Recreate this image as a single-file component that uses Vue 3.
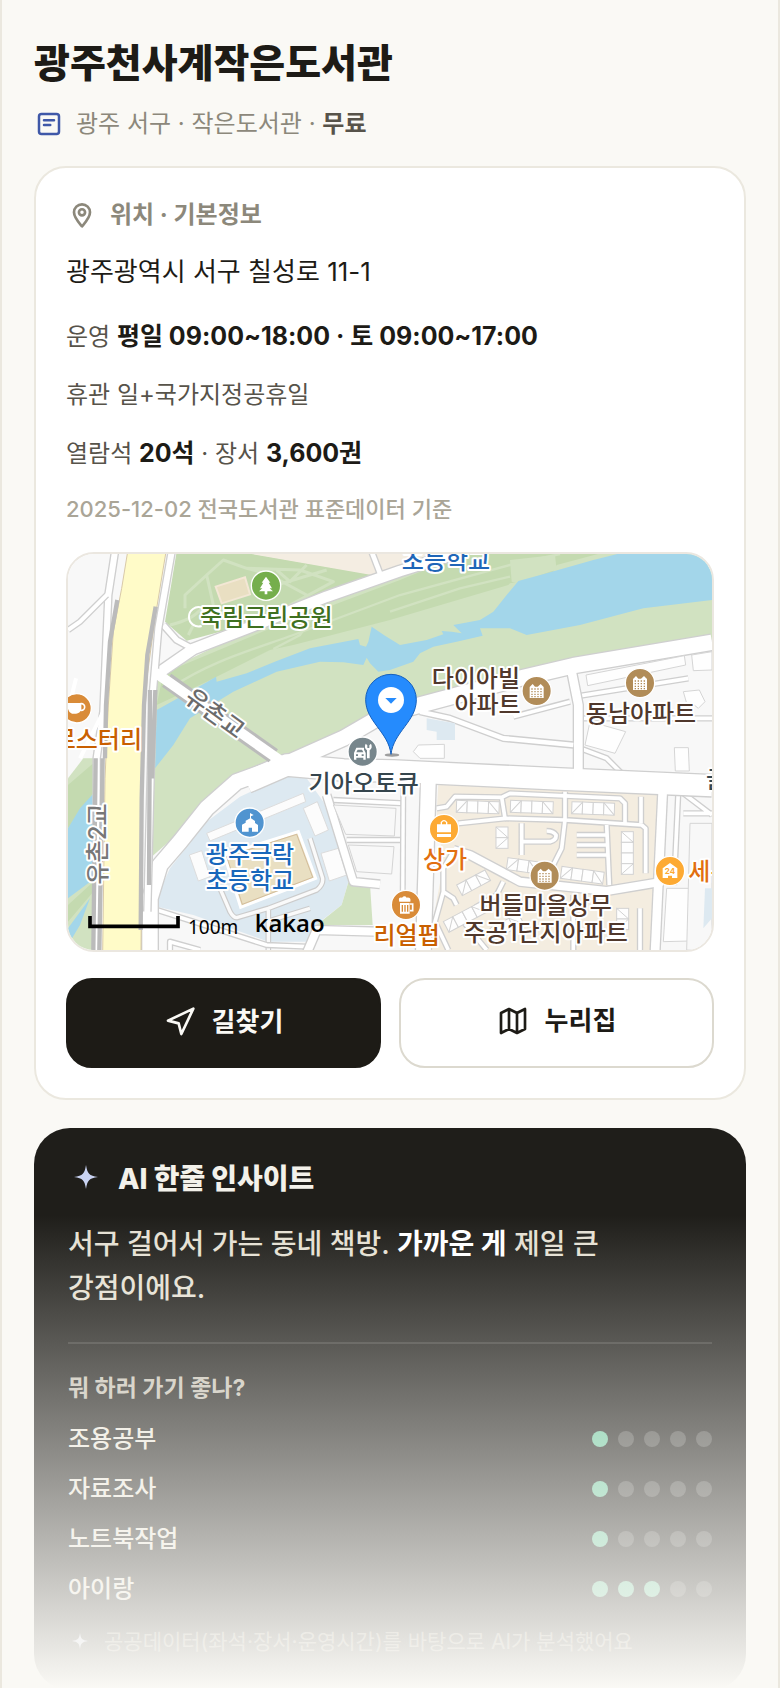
<template>
  <main class="app">
    <h1 class="title">광주천사계작은도서관</h1>
    <p class="meta">
      <svg class="icon" viewBox="0 0 24 24" aria-hidden="true">
        <rect x="4" y="4" width="16" height="16" rx="2" />
        <path d="M8 9h8M8 12.8h5" />
      </svg>
      <span>광주 서구 · 작은도서관 · <b>무료</b></span>
    </p>

    <section class="card">
      <h2 class="card-title">
        <svg class="icon pin" viewBox="0 0 24 24" aria-hidden="true">
          <path d="M12 20.500c-2.200-2.600-6-6.400-6-10.500a6 6 0 0 1 12 0c0 4.100-3.800 7.900-6 10.500z" />
          <circle cx="12" cy="10" r="2.300" />
        </svg>
        위치 · 기본정보
      </h2>
      <p class="address">광주광역시 서구 칠성로 11-1</p>
      <div class="facts">
        <p>운영 <b>평일 09:00~18:00 · 토 09:00~17:00</b></p>
        <p>휴관 일+국가지정공휴일</p>
        <p>열람석 <b>20석</b> · 장서 <b>3,600권</b></p>
      </div>
      <p class="source">2025-12-02 전국도서관 표준데이터 기준</p>

      <div class="map">
        <svg viewBox="24 27 1932 1188" preserveAspectRatio="xMidYMid slice" role="img" aria-label="지도">
          <rect x="24" y="27" width="1932" height="1188" fill="#f8f8f8" />

          <!-- 하천 둔치 -->
          <path fill="#d1e2c1" d="M270 400L600 240L1020 80L1200 20H1956V285L1540 350L1380 390L1080 465L760 605L560 705L430 800L275 935Z" />
          <path fill="#c4dab0" d="M310 385L620 255L1020 105L1230 20H1640L1490 60L1480 80L1375 110L1350 115L1345 120L990 225L700 300L630 315L440 410L290 480Z" />
          <path fill="none" stroke="#d1e2c1" stroke-width="7" d="M330 430C450 350 560 320 700 270L1020 150L1350 60L1500 27M640 312L720 270L760 210M990 200L1200 130L1350 95" />
          <path fill="#d1e2c1" d="M1350 45L1485 30L1490 75L1470 80L1375 115L1355 110Z" />
          <path fill="#a3d6ea" d="M290 495L440 412L468 395L470 410L560 385L650 348L750 310L895 282L900 300L918 305L925 290L935 245L975 272L1020 300L1100 285L1150 268L1145 258L1175 260L1205 265L1180 240L1260 225L1300 200L1340 150L1375 108L1460 85L1600 45L1700 20H1956V165L1750 190L1560 240L1400 270L1350 250H1260L1268 272L1190 290L1120 305L1080 325L1060 350L990 375L955 380L930 355L920 338L910 360L850 352L780 350L650 380L520 440L390 520L340 600L285 670Z" />
          <path fill="#d1e2c1" d="M24 700L70 640H110V1215H24Z" />
          <path fill="#c4dab0" d="M24 720L100 655V745L24 850ZM24 1080L100 1010V1040L24 1130Z" />
          <path fill="#a3d6ea" d="M24 850L60 790L105 740V1000L24 1060ZM24 1150L90 1060L60 1140L24 1200Z" />

          <!-- 공원 -->
          <path fill="#c4dab0" d="M350 20H540L935 88L700 180L520 250L380 287L315 230Z" />
          <path fill="#f4ede2" d="M535 20H935L958 85L935 90ZM935 20H1100V60L970 82Z" />
          <path fill="none" stroke="#d1e2c1" stroke-width="9" stroke-linejoin="round" d="M330 240C370 230 400 220 430 185M375 190V150L440 90L490 45L560 70L720 75L820 110L690 180M440 90L460 180M560 70L620 85L740 150M650 75L690 110L740 60M800 75L650 120M385 270L400 240" />
          <path fill="#e9dfc2" stroke="#f3e7d5" stroke-width="6" d="M467 125L555 97L570 148L485 175Z" />
          <path fill="none" stroke="#fff" stroke-width="6" d="M425 188A29 29 0 1 0 425 243" />

          <!-- 학교 부지 -->
          <path fill="#dde9f1" d="M680 690L740 700L790 770L830 880L865 1010L845 1080L780 1130L745 1190H625L400 1110L278 1082L330 970L440 830L540 755Z" />
          <path fill="#d1e2c1" d="M865 1012L930 1018L938 1140H770L845 1080Z" />
          <g fill="#fcfcfc" stroke="#dcdcdc" stroke-width="3">
            <path d="M440 865L730 745L737 770L450 888ZM730 790L772 770L805 855L765 873ZM388 930L425 917L450 995L415 1008ZM783 925L835 910L860 990L808 1008Z" />
          </g>
          <path fill="none" stroke="#ccc" stroke-width="17" stroke-linejoin="round" d="M750 880L788 1000Q790 1020 770 1035L625 1090L530 1118Q520 1118 510 1100L480 1030M625 1095V1215M620 1130L750 1090" />
          <path fill="none" stroke="#fafafa" stroke-width="10" stroke-linejoin="round" d="M750 880L788 1000Q790 1020 770 1035L625 1090L530 1118Q520 1118 510 1100L480 1030M625 1095V1215M620 1130L750 1090" />
          <path fill="#e9dfc2" stroke="#fff" stroke-width="9" d="M493 930L715 860L767 1000L542 1087Z" />
          <path fill="none" stroke="#c7ab86" stroke-width="2" d="M500 935L710 868L758 997L547 1078Z" />

          <!-- 아파트 단지 -->
          <path fill="#f4ede0" d="M1135 715L1793 743L1785 1015L1790 1215H1110L1120 1120L1150 960L1130 800Z" />

          <!-- 이면도로 -->
          <g fill="none" stroke-linejoin="round">
            <path v-for="(d, i) in alleys" :key="'c' + i" :d="d" stroke="#cfcfcf" stroke-width="19" />
            <path v-for="(d, i) in alleys" :key="'a' + i" :d="d" stroke="#fff" stroke-width="11" />
          </g>

          <!-- 주요 도로 -->
          <g fill="none" stroke-linejoin="round">
            <path v-for="(r, i) in roads" :key="'b' + i" :d="r.d" stroke="#cfcfcf" :stroke-width="r.w + 8" />
            <path v-for="(r, i) in roads" :key="'r' + i" :d="r.d" stroke="#fff" :stroke-width="r.w" />
          </g>

          <!-- 건물 -->
          <g fill="#fefefe" stroke="#d5d5d5" stroke-width="3">
            <path d="M1578 390L1873 332L1877 360L1583 422ZM1895 330L1956 320V375L1900 377ZM1870 440L1918 435L1935 470L1915 490L1900 478L1880 475ZM1590 530L1697 560L1665 625L1575 600ZM1075 600L1153 598V640H1080L1060 620ZM1843 608H1885L1888 678H1846ZM1820 1030H1890V1188L1810 1190Z" />
            <path fill="#f8f8f8" d="M820 780L1008 790L1003 873L857 868ZM865 900L1002 905L995 987L890 980ZM1890 835H1956V1215H1880Z" />
          </g>
          <path fill="#dde9f1" d="M1100 520L1185 535V585H1130V560L1100 555ZM1935 1030H1956V1120L1930 1150Z" />
          <g fill="#fefefe" stroke="#d2d2d2" stroke-width="3">
            <g v-for="(b, i) in blocks" :key="'k' + i" :transform="`translate(${b.x} ${b.y}) rotate(${b.r})`">
              <rect v-for="n in b.n" :key="n" :x="(n - 1) * 32" y="0" width="32" height="36" />
              <path :d="`M0 36L32 0M${(b.n - 1) * 32} 0l32 36`" />
            </g>
          </g>

          <!-- 고속 도로 -->
          <path fill="none" stroke="#cfcfcf" stroke-width="26" d="M165 20L145 150L130 500L110 640V1215M335 20L295 250L278 450L262 1100" />
          <path fill="none" stroke="#fff" stroke-width="18" d="M165 20L145 150L130 500L110 640V1215M335 20L295 250L278 450L262 1100V1215" />
          <path fill="none" stroke="#cfcfcf" stroke-width="20" d="M24 255L60 230L140 150" />
          <path fill="none" stroke="#fff" stroke-width="12" d="M24 255L60 230L145 145M24 500L48 400M60 640L130 500" />
          <path fill="#fffbc8" stroke="#d8c9a8" stroke-width="3" d="M203 20H318L285 220L262 390L248 600L243 1225H128L135 700L145 480L160 260L185 130Z" />
          <path fill="none" stroke="#bbb" stroke-width="13" d="M172 165L150 290L138 480L135 640M287 185L262 330L252 480L245 760L242 1155M270 435L267 1020M286 435L276 700M107 640L100 1215M128 640L118 1215" />

          <!-- 유촌교 -->
          <path fill="none" stroke="#bbb" stroke-width="48" d="M320 406L640 632" />
          <path fill="none" stroke="#fff" stroke-width="30" d="M285 382L660 646" />

          <g v-for="(p, i) in pois" :key="'p' + i" :transform="`translate(${p.x} ${p.y})`">
            <circle r="44" :fill="p.color" stroke="#fff" stroke-width="4" />
            <path v-if="p.type === 'tree'" fill="#fff" d="M0-27L13-9H8L18 8H11L21 17H4V26H-4V17H-21L-11 8H-18L-8-9H-13Z" />
            <g v-else-if="p.type === 'apt'">
              <path fill="#fff" d="M-21 21V-12L-12-21L-5-13H3L12-21L21-12V21Z" />
              <path stroke="#b18c58" stroke-width="4" stroke-dasharray="4 5" d="M-16-6H17M-16 2H17M-16 10H17M-16 17H17" />
            </g>
            <g v-else-if="p.type === 'cup'">
              <path fill="#fff" d="M-26-16H14V2Q10 16-2 16H-14Q-24 12-26 2Z" />
              <circle cx="14" cy="-4" r="10" fill="none" stroke="#fff" stroke-width="5" />
            </g>
            <g v-else-if="p.type === 'school'" fill="#fff">
              <path d="M-23 27V6L-12 0V-6L3-14L16-5V1L25 7V27H7V15H-3V27Z" />
              <path d="M1-12V-29L12-23L4-19V-12Z" />
            </g>
            <g v-else-if="p.type === 'bag'">
              <path fill="#fff" d="M-21-14H21V10H-21ZM-21 15H21V24H-21Z" />
              <path fill="none" stroke="#fff" stroke-width="4" d="M-8-12V-20Q0-30 8-20V-12" />
            </g>
            <g v-else-if="p.type === 'beer'">
              <path fill="#fff" d="M-20-10Q-25-24-12-22Q-4-30 2-22Q16-24 13-10ZM-18-6H11V26H-18Z" />
              <path fill="none" stroke="#fff" stroke-width="5" d="M12-3H20V17H12" />
              <path stroke="#d98b38" stroke-width="4" d="M-11 0V20M-3 0V20M5 0V20" />
            </g>
            <g v-else-if="p.type === 'store'">
              <path fill="#fff" d="M-22 21V-8L0-24L22-8V21H6V14H-6V21Z" />
              <text class="num" y="9" text-anchor="middle">24</text>
            </g>
            <g v-else>
              <path fill="#fff" fill-rule="evenodd" d="M-26 24V4L-19-12H4V-6L9 4V24H2V18H-19V24ZM-19 2H2L-2-6H-15ZM-20 8V13H-14V8ZM-3 8V13H3V8Z" />
              <path fill="#fff" d="M9-24L14-19V-11H20V-19L25-24Q31-12 21-4V20H13V-4Q3-12 9-24Z" />
            </g>
          </g>

          <text
            v-for="(l, i) in labels"
            :key="'l' + i"
            class="label"
            :text-anchor="l.anchor || 'middle'"
            :fill="l.color"
            :transform="`translate(${l.x} ${l.y}) rotate(${l.r || 0})`"
          >{{ l.text }}</text>

          <!-- 현재 도서관 위치 -->
          <ellipse cx="996" cy="630" rx="22" ry="5" fill="#777" opacity="0.7" />
          <path fill="#258bfd" stroke="#1560bd" stroke-width="3" d="M993 628C985 560 917 530 917 464A76 76 0 0 1 1069 464C1069 530 1001 560 993 628Z" />
          <circle cx="993" cy="465" r="39" fill="#fff" />
          <path fill="#258bfd" d="M976 459H1010L993 476Z" />

          <path fill="none" stroke="#000" stroke-width="11" d="M90 1113V1144H354V1113" />
          <text class="scale" x="384" y="1166">100m</text>
          <text class="kakao" x="584" y="1160">kakao</text>
        </svg>
      </div>

      <div class="actions">
        <button type="button" class="btn primary">
          <svg viewBox="0 0 24 24" aria-hidden="true">
            <path d="M3 11l19-9l-9 19l-2-8z" />
          </svg>
          길찾기
        </button>
        <a class="btn" href="#">
          <svg viewBox="0 0 24 24" aria-hidden="true">
            <path d="M3 6l6-3l6 3l6-3v15l-6 3l-6-3l-6 3zM9 3v15M15 6v15" />
          </svg>
          누리집
        </a>
      </div>
    </section>

    <section class="insight">
      <h2 class="insight-title">
        <svg viewBox="0 0 36 36" aria-hidden="true">
          <path d="M18 4C19.500 13 21 14.500 30 16C21 17.500 19.500 19 18 28C16.500 19 15 17.500 6 16C15 14.500 16.500 13 18 4Z" />
        </svg>
        AI 한줄 인사이트
      </h2>
      <p class="summary">서구 걸어서 가는 동네 책방. <b>가까운 게</b> 제일 큰 강점이에요.</p>
      <h3 class="question">뭐 하러 가기 좋나?</h3>
      <ul class="scores">
        <li v-for="s in scores" :key="s.name">
          <span>{{ s.name }}</span>
          <span class="dots">
            <i v-for="n in 5" :key="n" :class="{ on: n <= s.value }"></i>
          </span>
        </li>
      </ul>
      <p class="note">
        <svg viewBox="0 0 24 24" aria-hidden="true">
          <path d="M12 3C13 9 14 10 20 11C14 12 13 13 12 19C11 13 10 12 4 11C10 10 11 9 12 3Z" />
        </svg>
        공공데이터(좌석·장서·운영시간)를 바탕으로 AI가 분석했어요
      </p>
    </section>

    <div class="fade"></div>
  </main>
</template>

<script setup>
const scores = [
  { name: '조용공부', value: 1 },
  { name: '자료조사', value: 1 },
  { name: '노트북작업', value: 1 },
  { name: '아이랑', value: 3 },
]

// 지도 도로
const roads = [
  { d: 'M290 388L400 312L600 235L800 155L1020 78L1150 38L1200 20', w: 32 },
  { d: 'M310 240L350 285L400 312', w: 16 },
  { d: 'M935 20L960 85', w: 14 },
  { d: 'M270 1225V1060L300 960L360 890L440 790L530 710L670 660L850 580L970 510L1080 480L1380 400L1540 362L1956 292', w: 46 },
  { d: 'M560 712L680 660L850 675L1000 678L1500 702L1956 722', w: 64 },
  { d: 'M1080 500L1170 520L1330 580L1540 600', w: 14 },
  { d: 'M1533 370L1555 480V690', w: 26 },
  { d: 'M800 750L880 1010L960 1018', w: 22 },
  { d: 'M1030 700L1028 1090', w: 10 },
  { d: 'M1105 710L1090 1225', w: 44 },
  { d: 'M1808 740L1785 1225', w: 26 },
  { d: 'M1180 915L1230 930L1380 1010L1640 1038L1808 1010', w: 24 },
  { d: 'M740 1225L770 1155L960 1160', w: 24 },
]

const alleys = [
  'M1360 515L1530 470',
  'M1545 455L1885 400M1555 470V520L1956 520',
  'M1560 610L1640 640L1690 690',
  'M820 765L1035 775',
  'M860 885H1030',
  'M1130 790L1160 785L1185 755L1325 757L1350 745L1680 760L1695 775V835M1325 757L1335 820L1195 835',
  'M1335 820L1515 825L1515 740M1515 825L1745 840L1757 850V985M1385 835V930M1385 890H1470Q1490 885 1488 870Q1480 858 1460 858',
  'M1515 825L1505 910L1480 960M1640 840L1648 1020M1640 870H1550M1640 900H1550M1640 930H1550M1743 755V835',
  'M1180 920L1150 970V1040L1180 1060L1190 1080M1150 1040L1125 1130L1165 1215',
  'M1330 1010L1310 1050L1250 1085L1210 1130L1280 1215M1540 1050V1215M1740 1090V1215',
  'M1855 740L1842 1020M1870 745L1956 810M1870 805H1956',
  'M275 1090L620 1200L740 1205M330 1215V1190L420 1215',
]

const blocks = [
  { x: 1190, y: 766, n: 4, r: 2 },
  { x: 1352, y: 766, n: 4, r: 2 },
  { x: 1536, y: 770, n: 4, r: 2 },
  { x: 1344, y: 846, n: 2, r: 90 },
  { x: 1720, y: 860, n: 4, r: 90 },
  { x: 1344, y: 938, n: 3, r: 8 },
  { x: 1506, y: 964, n: 4, r: 8 },
  { x: 1190, y: 1020, n: 3, r: -28 },
  { x: 1150, y: 1130, n: 4, r: -28 },
  { x: 1290, y: 1150, n: 3, r: -28 },
  { x: 1706, y: 1090, n: 2, r: 90 },
]

const pois = [
  { type: 'tree', x: 618, y: 122, color: '#75ae4c' },
  { type: 'cup', x: 50, y: 490, color: '#d98b38' },
  { type: 'apt', x: 1430, y: 438, color: '#b18c58' },
  { type: 'apt', x: 1740, y: 414, color: '#b18c58' },
  { type: 'car', x: 908, y: 620, color: '#77868c' },
  { type: 'school', x: 569, y: 833, color: '#5094d0' },
  { type: 'bag', x: 1152, y: 852, color: '#fdaa33' },
  { type: 'apt', x: 1454, y: 992, color: '#b18c58' },
  { type: 'beer', x: 1038, y: 1080, color: '#d98b38' },
  { type: 'store', x: 1830, y: 978, color: '#fdaa33' },
]

const labels = [
  { text: '초등학교', x: 1158, y: 72, color: '#1f66b8' },
  { text: '죽림근린공원', x: 619, y: 242, color: '#3f7020' },
  { text: '로스터리', x: 246, y: 608, color: '#c95f00', anchor: 'end' },
  { text: '유촌교', x: 450, y: 526, color: '#6b6b6b', r: 36 },
  { text: '유촌2교', x: 138, y: 897, color: '#777', r: -90 },
  { text: '다이아빌', x: 1380, y: 425, color: '#50382c', anchor: 'end' },
  { text: '아파트', x: 1382, y: 505, color: '#50382c', anchor: 'end' },
  { text: '동남아파트', x: 1743, y: 532, color: '#50382c' },
  { text: '기아오토큐', x: 911, y: 740, color: '#35454d' },
  { text: '광주극락', x: 570, y: 953, color: '#1867bb' },
  { text: '초등학교', x: 570, y: 1032, color: '#1867bb' },
  { text: '상가', x: 1155, y: 970, color: '#e26f10' },
  { text: '리얼펍', x: 1040, y: 1198, color: '#c95f00' },
  { text: '버들마을상무', x: 1457, y: 1108, color: '#50382c' },
  { text: '주공1단지아파트', x: 1457, y: 1189, color: '#50382c' },
  { text: '세븐', x: 1885, y: 1006, color: '#e26f10', anchor: 'start' },
  { text: '글로', x: 1938, y: 730, color: '#35454d', anchor: 'start' },
]
</script>

<style>
body {
  margin: 0;
  background: #faf9f5;
}
</style>

<style scoped>
* {
  box-sizing: border-box;
}

.app {
  position: relative;
  height: 100vh;
  overflow: hidden;
  padding: 38px 32px 0;
  border: solid #ebe8df;
  border-width: 0 2px;
  background: #faf9f5;
  color: #1d1b16;
  font-family: Inter, "Noto Sans CJK KR", sans-serif;
  word-break: keep-all;
}

h1, h2, h3, p, ul {
  margin: 0;
}

.title {
  font-size: 39px;
  line-height: 50px;
  font-weight: 800;
}

.meta {
  display: flex;
  align-items: center;
  gap: 12px;
  margin-top: 20px;
  font-size: 24px;
  line-height: 32px;
  color: #8c887b;
}

.meta b {
  color: #57534a;
}

.icon {
  flex: none;
  width: 30px;
  height: 30px;
  fill: none;
  stroke: #8c887b;
  stroke-width: 2;
  stroke-linecap: round;
  stroke-linejoin: round;
}

.meta .icon {
  stroke: #3f58a8;
}

.card {
  margin-top: 26px;
  padding: 30px;
  border: 2px solid #ebe8df;
  border-radius: 32px;
  background: #fff;
}

.card-title {
  display: flex;
  align-items: center;
  gap: 12px;
  font-size: 24px;
  line-height: 34px;
  color: #8c887b;
}

.card-title .pin {
  width: 32px;
  height: 32px;
}

.address {
  margin-top: 20px;
  font-size: 26px;
  line-height: 40px;
}

.facts {
  display: grid;
  gap: 22px;
  margin-top: 26px;
  font-size: 24px;
  line-height: 36px;
  color: #57534a;
}

.facts b {
  font-size: 25px;
  color: #1d1b16;
}

.source {
  margin-top: 22px;
  font-size: 22px;
  font-weight: 500;
  line-height: 30px;
  color: #aaa597;
}

.map {
  height: 400px;
  margin-top: 28px;
  overflow: hidden;
  border: 2px solid #ebe7e0;
  border-radius: 28px;
}

.map svg {
  display: block;
  width: 100%;
  height: 100%;
}

.label {
  font-size: 72px;
  font-weight: 500;
  stroke: #fff;
  stroke-width: 12;
  stroke-linejoin: round;
  paint-order: stroke;
}

.num {
  font-size: 24px;
  font-weight: 700;
  fill: #fdaa33;
}

.scale {
  font-size: 57px;
  font-family: "Noto Sans", sans-serif;
}

.kakao {
  font-size: 72px;
  font-weight: 600;
  font-family: "Open Sans", sans-serif;
}

.actions {
  display: grid;
  grid-template-columns: 1fr 1fr;
  gap: 18px;
  margin-top: 26px;
}

.btn {
  display: flex;
  align-items: center;
  justify-content: center;
  gap: 16px;
  height: 90px;
  padding-bottom: 4px;
  border: 2px solid #dcd9cf;
  border-radius: 26px;
  background: #fff;
  color: #1d1b16;
  font-family: inherit;
  font-size: 26px;
  font-weight: 700;
  line-height: 32px;
  text-decoration: none;
  cursor: pointer;
}

.btn svg {
  width: 32px;
  height: 32px;
  fill: none;
  stroke: currentColor;
  stroke-width: 2;
  stroke-linejoin: round;
}

.primary {
  border-color: #1d1b16;
  background: #1d1b16;
  color: #faf9f5;
}

.insight {
  margin-top: 28px;
  padding: 30px 34px 32px;
  border-radius: 36px;
  background: #1f1e1a;
  color: #f3f1ea;
}

.insight-title {
  display: flex;
  align-items: center;
  gap: 14px;
  font-size: 28px;
  font-weight: 800;
  line-height: 42px;
}

.insight-title svg {
  width: 36px;
  height: 36px;
  fill: #c9d3f2;
}

.summary {
  margin-top: 22px;
  padding-bottom: 32px;
  border-bottom: 2px solid rgba(255, 255, 255, 0.12);
  font-size: 28px;
  font-weight: 500;
  line-height: 44px;
  color: #e5e0d3;
}

.summary b {
  color: #fff;
}

.question {
  margin-top: 28px;
  font-size: 23px;
  line-height: 32px;
  color: #c6c1b4;
}

.scores {
  margin-top: 10px;
  padding: 0;
  list-style: none;
  font-size: 24px;
  font-weight: 500;
  line-height: 50px;
  color: #ece8dd;
}

.scores li {
  display: flex;
  align-items: center;
  justify-content: space-between;
}

.dots {
  display: flex;
  gap: 10px;
}

.dots i {
  width: 16px;
  height: 16px;
  border-radius: 50%;
  background: rgba(255, 255, 255, 0.2);
}

.dots .on {
  background: #6fc9a0;
}

.note {
  display: flex;
  align-items: center;
  gap: 12px;
  margin-top: 12px;
  font-size: 21px;
  line-height: 32px;
  color: #8c887b;
}

.note svg {
  width: 24px;
  height: 24px;
  fill: #c9d3f2;
}

.fade {
  position: absolute;
  right: -2px;
  bottom: 0;
  left: -2px;
  height: 28%;
  background: linear-gradient(rgba(250, 249, 245, 0), #faf9f5);
  pointer-events: none;
}
</style>
